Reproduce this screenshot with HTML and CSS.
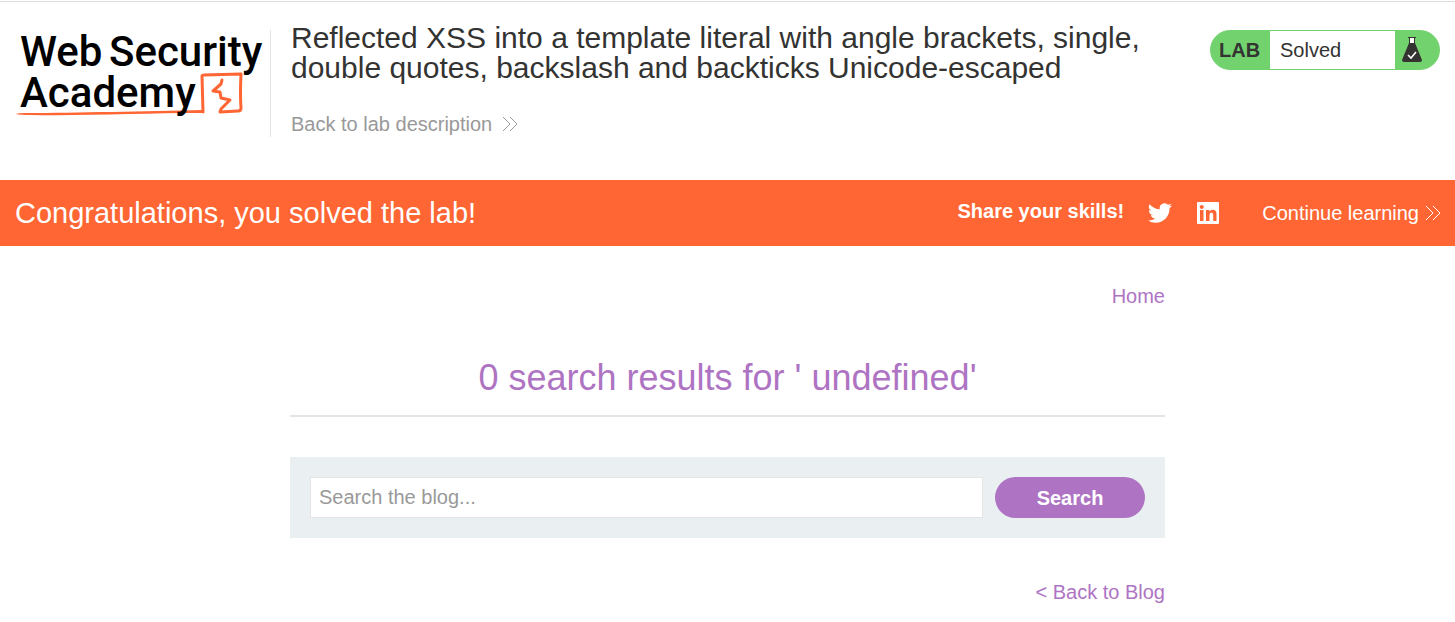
FILE: index.html
```html
<!DOCTYPE html>
<html lang="en">
<head>
<meta charset="utf-8">
<title>Reflected XSS into a template literal</title>
<link rel="stylesheet" href="styles.css">
</head>
<body>
<header class="lab-header">
  <a class="logo" href="#" aria-label="Web Security Academy">
    <svg class="logo-art" viewBox="0 0 254 107">
      <path class="logo-line" d="M0 84 Q2 83 10 83 C60 83 130 81 187 80 L187 83 C130 83 70 86 15 85 Q4 85 0 84Z"/>
      <path class="logo-box" d="M187 82 L186 46 Q186 45 188 45 L225 44 Q224 65 225 78 Q225 81 222 81 L204 82 L205 79 L214 70 L205 68 L204 62 L197 61 L205 54 L206 50"/>
      <g class="logo-text">
        <text x="4" y="36">Web</text>
        <text x="93" y="36">Security</text>
        <text x="4" y="77">Academy</text>
      </g>
    </svg>
  </a>
  <div class="title">
    <h2>Reflected XSS into a template literal with angle brackets, single, double quotes, backslash and backticks Unicode-escaped</h2>
    <a class="back-link" href="#">Back to lab description
      <svg class="chevrons" viewBox="0 0 16 16"><path d="M1 1l7 7-7 7M8 1l7 7-7 7"/></svg>
    </a>
  </div>
  <div class="status">
    <span class="status-tag">LAB</span>
    <span class="status-text">Solved</span>
    <span class="status-icon">
      <svg class="flask" viewBox="0 0 20 26">
        <path fill="#fff" d="M7 1h6v6H7z"/>
        <path fill="#333332" d="M6 0h8v1h-1v5l7 17q0 2-2 2H2q-2 0-2-2L7 6V1H6zM8 1v5h4V1z" fill-rule="evenodd"/>
        <path fill="none" stroke="#fff" stroke-width="1.600" d="M6 18l3 3 5-6"/>
      </svg>
    </span>
  </div>
</header>
<section class="banner">
  <h4>Congratulations, you solved the lab!</h4>
  <span class="share">Share your skills!</span>
  <a class="social" href="#" aria-label="Twitter">
    <svg viewBox="0 0 24 24"><path d="M23.95 4.57a10 10 0 0 1-2.82.77 4.96 4.96 0 0 0 2.16-2.72c-.95.55-2 .96-3.13 1.18a4.92 4.92 0 0 0-8.38 4.48C7.69 8.1 4.07 6.13 1.64 3.16a4.92 4.92 0 0 0 1.52 6.57 4.9 4.9 0 0 1-2.23-.61v.06a4.92 4.92 0 0 0 3.95 4.83 5 5 0 0 1-2.21.08 4.94 4.94 0 0 0 4.6 3.42A9.87 9.87 0 0 1 0 19.54a14 14 0 0 0 7.55 2.21c9.05 0 14-7.5 14-13.98 0-.21 0-.42-.02-.63a9.94 9.94 0 0 0 2.46-2.55z"/></svg>
  </a>
  <a class="social" href="#" aria-label="LinkedIn">
    <svg viewBox="0 0 24 24"><path fill-rule="evenodd" d="M2 1h20q1 0 1 1v20q0 1-1 1H2q-1 0-1-1V2q0-1 1-1zM4 9v11h3.500V9zM5.700 4a2 2 0 1 0 .1 0zM10 9v11h3.500v-6q0-2.500 1.900-2.500t1.800 2.500v6h3.300v-7q0-4.300-3.800-4.300-2.200 0-3.300 1.800V9z"/></svg>
  </a>
  <a class="continue" href="#">Continue learning
    <svg class="chevrons" viewBox="0 0 16 16"><path d="M1 1l7 7-7 7M8 1l7 7-7 7"/></svg>
  </a>
</section>
<main class="container">
  <nav class="nav"><a href="#">Home</a></nav>
  <h1>0 search results for ' undefined'</h1>
  <form class="search">
    <input type="text" placeholder="Search the blog..." aria-label="Search the blog">
    <button type="submit">Search</button>
  </form>
  <div class="back-blog"><a href="#">&lt; Back to Blog</a></div>
</main>
</body>
</html>
```
FILE: styles.css
```css
* { box-sizing: border-box; }
body {
  margin: 0;
  font-family: "Liberation Sans", Arial, sans-serif;
  font-size: 20px;
  line-height: 24px;
  color: #333332;
  background: #fff;
}
h1, h2, h4 { margin: 0; font-weight: 400; }
a { text-decoration: none; }
svg { display: block; flex: none; }

.lab-header {
  display: flex;
  align-items: flex-start;
  margin-top: 1px;
  border-top: 1px solid #dcdcdc;
  padding: 21px 15px 43px 16px;
}
.logo {
  flex: none;
  margin-top: 7px;
  border-right: 1px solid #e4e4e4;
}
.logo-art { width: 254px; height: 107px; overflow: visible; }
.logo-text {
  font-family: Roboto, sans-serif;
  font-size: 42px;
  font-weight: 500;
  fill: #000;
}
.logo-line { fill: #ff6633; }
.logo-box { fill: none; stroke: #ff6633; stroke-width: 3; stroke-linejoin: round; stroke-linecap: round; }
.title { flex: 1; padding: 0 60px 0 20px; }
.title h2 { font-size: 30px; line-height: 30px; }
.back-link {
  display: inline-flex;
  align-items: center;
  gap: 10px;
  margin-top: 29px;
  color: #999;
}
.chevrons { width: 16px; height: 16px; fill: none; stroke: currentColor; stroke-width: 1; }
.status {
  display: flex;
  flex: none;
  width: 230px;
  height: 40px;
  margin-top: 7px;
  border: 1px solid #72d26e;
  border-radius: 20px;
  overflow: hidden;
  background: linear-gradient(90deg, #72d26e 60px, #fff 60px, #fff calc(100% - 45px), #72d26e calc(100% - 45px)) border-box;
  line-height: 38px;
}
.status-tag { width: 60px; padding-left: 8px; font-weight: 700; }
.status-text { flex: 1; padding-left: 9px; }
.status-icon { display: flex; align-items: center; width: 45px; padding-left: 8px; }
.flask { width: 20px; height: 26px; }

.banner {
  display: flex;
  align-items: center;
  padding: 18px 14px 18px 15px;
  background: #ff6633;
  color: #fff;
}
.banner h4 { flex: 1; font-size: 29px; line-height: 30px; }
.share { padding-bottom: 4px; font-weight: 700; }
.social { margin-left: 24px; }
.social svg { width: 24px; height: 24px; fill: #fff; }
.continue { display: flex; align-items: center; gap: 6px; margin-left: 42px; color: #fff; }

.container { max-width: 875px; margin: 0 auto; color: #ae74c3; }
.container a { color: #ae74c3; }
.nav { padding-top: 38px; text-align: right; }
.container h1 {
  margin-top: 50px;
  padding-bottom: 17px;
  border-bottom: 2px solid #e4e4e4;
  font-size: 36px;
  line-height: 40px;
  text-align: center;
}
.search {
  display: flex;
  gap: 12px;
  margin-top: 40px;
  padding: 20px;
  background: #eaeff2;
}
.search input {
  flex: 1;
  min-width: 0;
  height: 41px;
  padding: 0 8px;
  border: 1px solid #e4e4e4;
  background: #fff;
  font: inherit;
}
.search input::placeholder { color: #999; opacity: 1; }
.search button {
  width: 150px;
  height: 41px;
  border: 0;
  border-radius: 21px;
  background: #ae74c3;
  color: #fff;
  font: inherit;
  font-weight: 700;
}
.back-blog { margin-top: 42px; text-align: right; }
```
